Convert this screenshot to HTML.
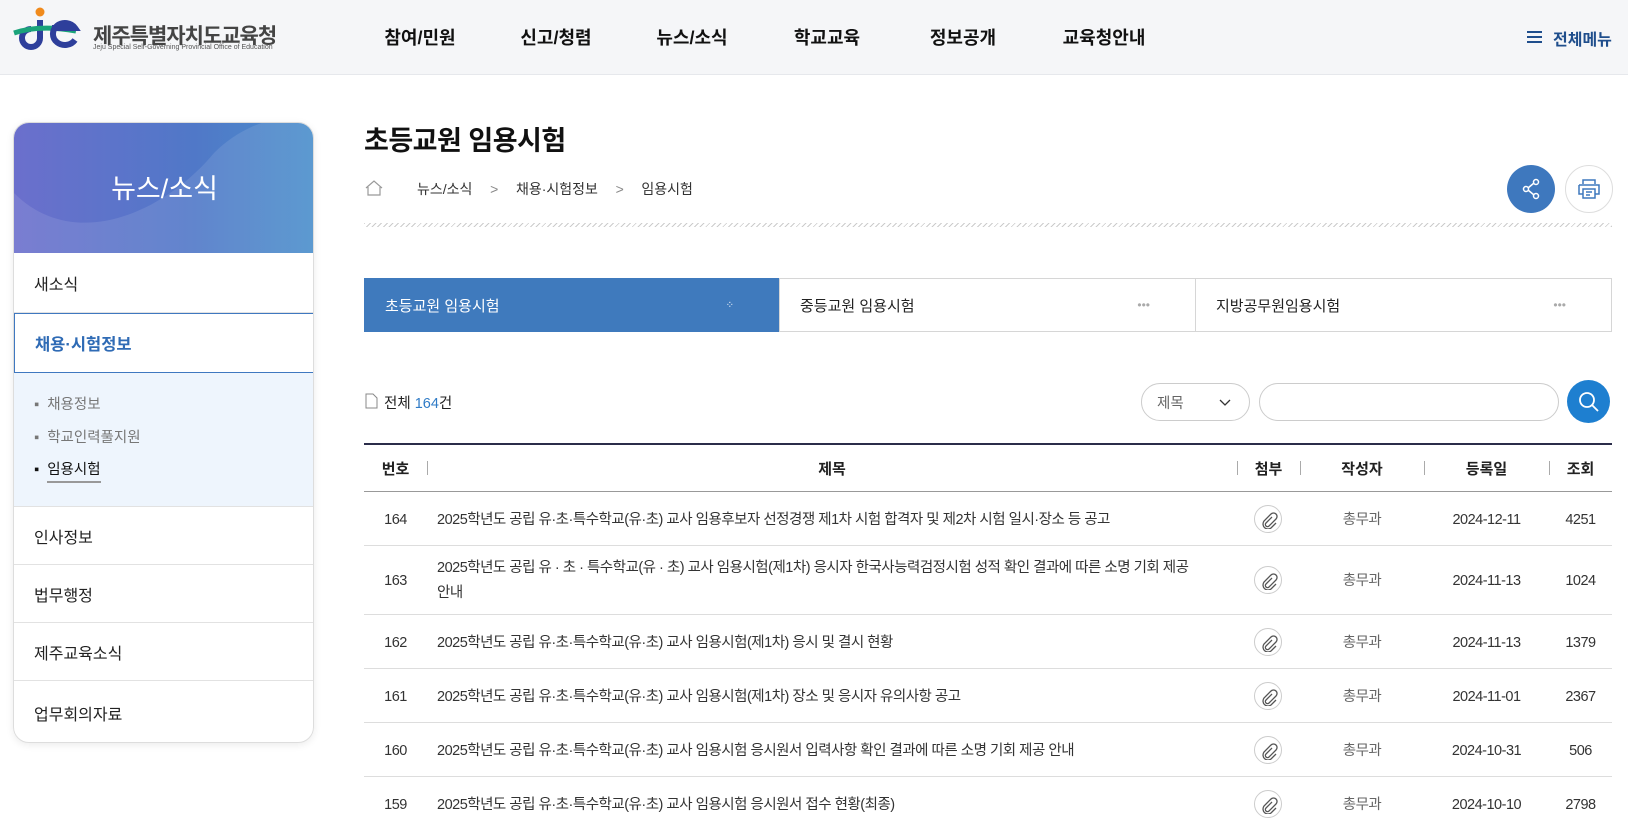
<!DOCTYPE html>
<html><head><meta charset="utf-8"><style>
*{margin:0;padding:0;box-sizing:border-box}
body{width:1628px;height:818px;overflow:hidden;background:#fff;font-family:"Liberation Sans","Noto Sans CJK KR",sans-serif;color:#222;position:relative}
.abs{position:absolute}
.hdr{left:0;top:0;width:1628px;height:75px;background:#f5f6f8;border-bottom:1px solid #e6e8ec}
.nav{top:24px;font-size:18px;font-weight:bold;color:#111;transform:translateX(-50%);white-space:nowrap}
.side{left:13px;top:122px;width:301px;height:621px;border:1px solid #ddd;border-radius:16px;overflow:hidden;box-shadow:0 2px 8px rgba(0,0,0,.08)}
.ban{left:0;top:0;width:301px;height:130px;background:linear-gradient(90deg,#6b6fcc,#5078c8 60%,#4a8fcb)}
.row{left:0;width:301px;border-bottom:1px solid #e2e2e2;font-size:16px;padding-left:20px;display:flex;align-items:center}
.sub{font-size:14.5px;color:#777;left:20px}
.tab{top:278px;height:54px;border:1px solid #d6d6d6;font-size:15px;display:flex;align-items:center;padding-left:20px}
.th{top:444px;height:48px;font-size:15px;font-weight:bold;display:flex;align-items:center;justify-content:center}
.sep{width:1px;height:14px;background:#aaa;top:461px}
.td{font-size:14.5px;color:#333;letter-spacing:-0.5px;line-height:20px;display:block;word-break:keep-all}
.clip{width:28px;height:28px;border:1px solid #ccc;border-radius:50%;display:block}
.clip svg{position:absolute;left:5px;top:5px}
</style></head><body>
<div class="abs hdr"></div>
<svg class="abs" style="left:12px;top:6px" width="70" height="46" viewBox="0 0 70 46">
<circle cx="28" cy="6" r="4.5" fill="#f08a1c"/>
<path d="M28 14v18a9 9 0 1 1-9-9" stroke="#2e3f9b" stroke-width="6" fill="none"/>
<path d="M2 27c18-6 40-6 62-2" stroke="#1aa37a" stroke-width="5" fill="none"/>
<path d="M63 34a12 11 0 1 1 0-12H40" stroke="#2e3f9b" stroke-width="6" fill="none"/>
</svg>
<div class="abs" style="left:93px;top:20px;font-size:21px;font-weight:bold;color:#444;letter-spacing:-1px">제주특별자치도교육청</div>
<div class="abs" style="left:93px;top:44px;font-size:7px;color:#555;white-space:nowrap">Jeju Special Self-Governing Provincial Office of Education</div>
<div class="abs nav" style="left:420px">참여/민원</div>
<div class="abs nav" style="left:556px">신고/청렴</div>
<div class="abs nav" style="left:692px">뉴스/소식</div>
<div class="abs nav" style="left:827px">학교교육</div>
<div class="abs nav" style="left:963px">정보공개</div>
<div class="abs nav" style="left:1104px">교육청안내</div>
<div class="abs" style="left:1527px;top:31px;width:15px;height:2px;background:#1f4e8c;box-shadow:0 5px 0 #1f4e8c,0 10px 0 #1f4e8c"></div>
<div class="abs" style="left:1553px;top:26px;font-size:16px;font-weight:bold;color:#1f4e8c">전체메뉴</div>

<div class="abs side">
<div class="abs ban"><svg width="301" height="130"><path d="M0 70c60 60 150 20 200-40 40-40 90-40 101-30v130H0z" fill="rgba(255,255,255,.1)"/></svg>
<div class="abs" style="left:0;top:44px;width:301px;text-align:center;color:#fff;font-size:27px">뉴스/소식</div></div>
<div class="abs row" style="top:130px;height:60px">새소식</div>
<div class="abs row" style="top:190px;height:60px;border:1px solid #3f78c0;color:#2f6bb5;font-weight:bold;font-size:16.5px">채용·시험정보</div>
<div class="abs" style="left:0;top:250px;width:301px;height:134px;background:#eef5fd;border-bottom:1px solid #e2e2e2"></div>
<div class="abs sub" style="top:270px">▪&nbsp;&nbsp;채용정보</div>
<div class="abs sub" style="top:303px">▪&nbsp;&nbsp;학교인력풀지원</div>
<div class="abs sub" style="top:335px;color:#111">▪&nbsp;&nbsp;<span style="border-bottom:2px solid #999;padding-bottom:3px">임용시험</span></div>
<div class="abs row" style="top:384px;height:58px">인사정보</div>
<div class="abs row" style="top:442px;height:58px">법무행정</div>
<div class="abs row" style="top:500px;height:58px">제주교육소식</div>
<div class="abs row" style="top:558px;height:63px;border:none">업무회의자료</div>
</div>

<div class="abs" style="left:364px;top:119px;font-size:27px;font-weight:bold;color:#111;letter-spacing:-0.5px">초등교원 임용시험</div>
<svg class="abs" style="left:365px;top:180px" width="18" height="16" viewBox="0 0 18 16"><path d="M1 8L9 1l8 7M3 7v8h12V7" fill="none" stroke="#999" stroke-width="1.2"/></svg>
<div class="abs" style="left:417px;top:179px;font-size:14px;color:#333;word-spacing:2px">뉴스/소식 &nbsp;&nbsp;<span style="color:#888">&gt;</span>&nbsp;&nbsp; 채용·시험정보 &nbsp;&nbsp;<span style="color:#888">&gt;</span>&nbsp;&nbsp; 임용시험</div>
<div class="abs" style="left:1507px;top:165px;width:48px;height:48px;border-radius:50%;background:#3e78be"></div>
<svg class="abs" style="left:1519px;top:177px" width="24" height="24" viewBox="0 0 24 24"><g fill="none" stroke="#fff" stroke-width="1.5"><circle cx="17" cy="5" r="2.5"/><circle cx="7" cy="12" r="2.5"/><circle cx="17" cy="19" r="2.5"/><path d="M9 11l6-5M9 13l6 5"/></g></svg>
<div class="abs" style="left:1565px;top:165px;width:48px;height:48px;border-radius:50%;border:1px solid #ddd"></div>
<svg class="abs" style="left:1577px;top:177px" width="24" height="24" viewBox="0 0 24 24"><g fill="none" stroke="#3e78be" stroke-width="1.5"><path d="M6 7V3h12v4M2 8h20v9h-4M6 17H2V8"/><rect x="6" y="12" width="12" height="9"/><path d="M9 15h6M9 18h4"/></g></svg>
<div class="abs" style="left:364px;top:223px;width:1248px;height:4px;background:repeating-linear-gradient(135deg,#ccc 0 1px,transparent 1px 4px)"></div>

<div class="abs tab" style="left:364px;width:416px;background:#3f7abd;border-color:#3f7abd;color:#fff">초등교원 임용시험<span style="position:absolute;right:45px;font-size:10px">⁘</span></div>
<div class="abs tab" style="left:779px;width:417px">중등교원 임용시험<span style="position:absolute;right:45px;color:#aaa;font-size:12px">•••</span></div>
<div class="abs tab" style="left:1195px;width:417px">지방공무원임용시험<span style="position:absolute;right:45px;color:#aaa;font-size:12px">•••</span></div>

<svg class="abs" style="left:365px;top:393px" width="13" height="16" viewBox="0 0 13 16"><path d="M1 1h7l4 4v10H1z" fill="none" stroke="#888"/></svg>
<div class="abs" style="left:384px;top:392px;font-size:14.5px">전체 <span style="color:#2f7bc6">164</span>건</div>
<div class="abs" style="left:1141px;top:383px;width:109px;height:38px;border:1px solid #ccc;border-radius:19px;font-size:14.5px;color:#666;padding:8px 0 0 15px">제목<svg style="position:absolute;right:18px;top:15px" width="12" height="8" viewBox="0 0 12 8"><path d="M1 1l5 5 5-5" fill="none" stroke="#333" stroke-width="1.3"/></svg></div>
<div class="abs" style="left:1259px;top:383px;width:300px;height:38px;border:1px solid #ccc;border-radius:19px"></div>
<div class="abs" style="left:1567px;top:380px;width:43px;height:43px;border-radius:50%;background:#1e7fd0"></div>
<svg class="abs" style="left:1577px;top:390px" width="24" height="24" viewBox="0 0 24 24"><circle cx="10" cy="10" r="7" fill="none" stroke="#fff" stroke-width="1.8"/><path d="M15 15l6 6" stroke="#fff" stroke-width="1.8"/></svg>

<div class="abs" style="left:364px;top:443px;width:1248px;height:2px;background:#2b2d4a"></div>
<div class="abs" style="left:364px;top:491px;width:1248px;height:1px;background:#999"></div>
<div class="abs th" style="left:364px;width:63px">번호</div>
<div class="abs th" style="left:427px;width:810px">제목</div>
<div class="abs th" style="left:1237px;width:63px">첨부</div>
<div class="abs th" style="left:1300px;width:124px">작성자</div>
<div class="abs th" style="left:1424px;width:125px">등록일</div>
<div class="abs th" style="left:1549px;width:63px">조회</div>
<div class="abs sep" style="left:427px"></div><div class="abs sep" style="left:1237px"></div><div class="abs sep" style="left:1300px"></div><div class="abs sep" style="left:1424px"></div><div class="abs sep" style="left:1549px"></div>

<svg width="0" height="0" style="position:absolute"><defs><g id="pc"><path d="M12 6l-6 6a2 2 0 0 0 3 3l7-7a3.5 3.5 0 0 0-5-5l-7 7a5 5 0 0 0 7 7l5-5" fill="none" stroke="#555" stroke-width="1.3"/></g></defs></svg>

<div class="abs" style="left:364px;top:492px;width:1248px">
<div style="position:relative;height:54px;border-bottom:1px solid #ddd"><span class="abs td" style="left:0;width:63px;text-align:center;top:18px">164</span><span class="abs td" style="left:73px;top:18px">2025학년도 공립 유·초·특수학교(유·초) 교사 임용후보자 선정경쟁 제1차 시험 합격자 및 제2차 시험 일시·장소 등 공고</span><span class="abs clip" style="left:890px;top:13px"><svg width="18" height="18"><use href="#pc"/></svg></span><span class="abs td" style="left:936px;width:124px;text-align:center;top:18px;color:#666">총무과</span><span class="abs td" style="left:1060px;width:125px;text-align:center;top:18px">2024-12-11</span><span class="abs td" style="left:1185px;width:63px;text-align:center;top:18px">4251</span></div>
<div style="position:relative;height:69px;border-bottom:1px solid #ddd"><span class="abs td" style="left:0;width:63px;text-align:center;top:25px">163</span><span class="abs td" style="left:73px;top:10px;width:770px;line-height:25px">2025학년도 공립 유 · 초 · 특수학교(유 · 초) 교사 임용시험(제1차) 응시자 한국사능력검정시험 성적 확인 결과에 따른 소명 기회 제공 안내</span><span class="abs clip" style="left:890px;top:20px"><svg width="18" height="18"><use href="#pc"/></svg></span><span class="abs td" style="left:936px;width:124px;text-align:center;top:25px;color:#666">총무과</span><span class="abs td" style="left:1060px;width:125px;text-align:center;top:25px">2024-11-13</span><span class="abs td" style="left:1185px;width:63px;text-align:center;top:25px">1024</span></div>
<div style="position:relative;height:54px;border-bottom:1px solid #ddd"><span class="abs td" style="left:0;width:63px;text-align:center;top:18px">162</span><span class="abs td" style="left:73px;top:18px">2025학년도 공립 유·초·특수학교(유·초) 교사 임용시험(제1차) 응시 및 결시 현황</span><span class="abs clip" style="left:890px;top:13px"><svg width="18" height="18"><use href="#pc"/></svg></span><span class="abs td" style="left:936px;width:124px;text-align:center;top:18px;color:#666">총무과</span><span class="abs td" style="left:1060px;width:125px;text-align:center;top:18px">2024-11-13</span><span class="abs td" style="left:1185px;width:63px;text-align:center;top:18px">1379</span></div>
<div style="position:relative;height:54px;border-bottom:1px solid #ddd"><span class="abs td" style="left:0;width:63px;text-align:center;top:18px">161</span><span class="abs td" style="left:73px;top:18px">2025학년도 공립 유·초·특수학교(유·초) 교사 임용시험(제1차) 장소 및 응시자 유의사항 공고</span><span class="abs clip" style="left:890px;top:13px"><svg width="18" height="18"><use href="#pc"/></svg></span><span class="abs td" style="left:936px;width:124px;text-align:center;top:18px;color:#666">총무과</span><span class="abs td" style="left:1060px;width:125px;text-align:center;top:18px">2024-11-01</span><span class="abs td" style="left:1185px;width:63px;text-align:center;top:18px">2367</span></div>
<div style="position:relative;height:54px;border-bottom:1px solid #ddd"><span class="abs td" style="left:0;width:63px;text-align:center;top:18px">160</span><span class="abs td" style="left:73px;top:18px">2025학년도 공립 유·초·특수학교(유·초) 교사 임용시험 응시원서 입력사항 확인 결과에 따른 소명 기회 제공 안내</span><span class="abs clip" style="left:890px;top:13px"><svg width="18" height="18"><use href="#pc"/></svg></span><span class="abs td" style="left:936px;width:124px;text-align:center;top:18px;color:#666">총무과</span><span class="abs td" style="left:1060px;width:125px;text-align:center;top:18px">2024-10-31</span><span class="abs td" style="left:1185px;width:63px;text-align:center;top:18px">506</span></div>
<div style="position:relative;height:54px"><span class="abs td" style="left:0;width:63px;text-align:center;top:18px">159</span><span class="abs td" style="left:73px;top:18px">2025학년도 공립 유·초·특수학교(유·초) 교사 임용시험 응시원서 접수 현황(최종)</span><span class="abs clip" style="left:890px;top:13px"><svg width="18" height="18"><use href="#pc"/></svg></span><span class="abs td" style="left:936px;width:124px;text-align:center;top:18px;color:#666">총무과</span><span class="abs td" style="left:1060px;width:125px;text-align:center;top:18px">2024-10-10</span><span class="abs td" style="left:1185px;width:63px;text-align:center;top:18px">2798</span></div>
</div>
</body></html>
